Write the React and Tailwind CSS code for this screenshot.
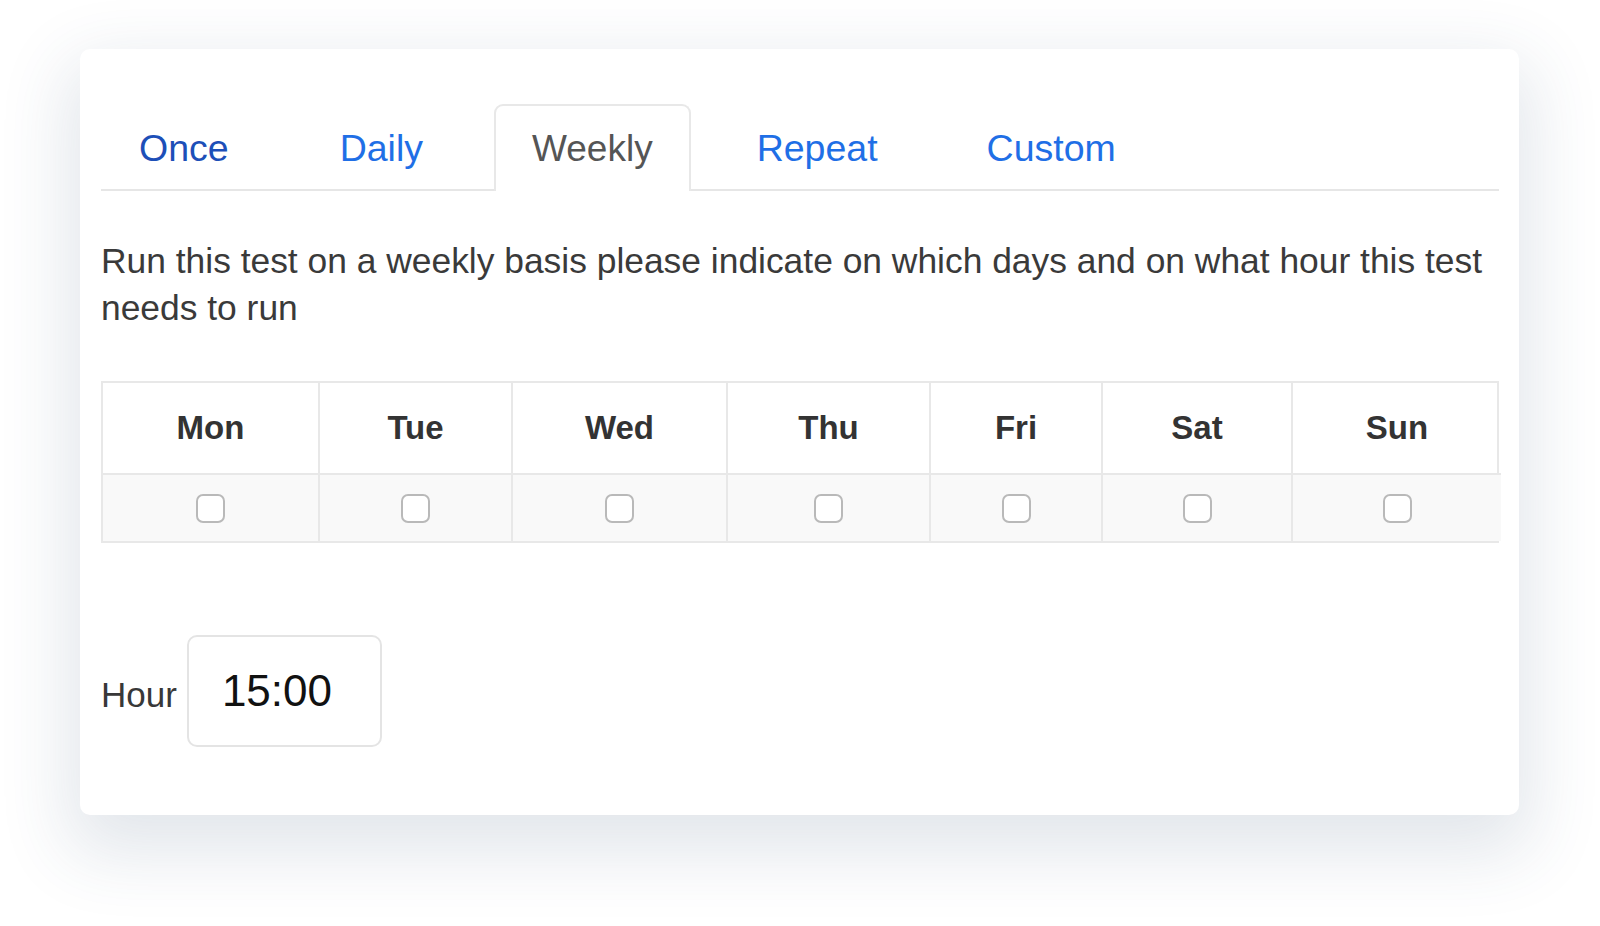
import React from "react";

const tabs = [
  { label: "Once", color: "text-[#1d4fb8]", mr: "mr-[35px]" },
  { label: "Daily", color: "text-[#1f6fe6]", mr: "mr-[33px]" },
  { label: "Weekly", active: true, mr: "mr-[28px]" },
  { label: "Repeat", color: "text-[#1f6fe6]", mr: "mr-[33px]" },
  { label: "Custom", color: "text-[#1f6fe6]", mr: "" },
];

const days = ["Mon", "Tue", "Wed", "Thu", "Fri", "Sat", "Sun"];

export default function App() {
  return (
    <div
      className="w-[1600px] h-[926px] bg-white overflow-hidden pt-[49px] pl-[80px]"
      style={{ fontFamily: '"Liberation Sans", Arial, sans-serif' }}
    >
      <div className="w-[1439px] h-[766px] bg-white rounded-[10px] shadow-[0_26px_70px_12px_rgba(50,75,115,0.14)] pt-[55px] pl-[21px] pr-[20px]">
        {/* Tabs */}
        <div className="flex items-end border-b-2 border-[#e6e6e6] h-[87px]">
          {tabs.map((t) =>
            t.active ? (
              <div
                key={t.label}
                className={`h-[87px] -mb-[2px] px-[36px] flex items-center bg-white border-2 border-b-0 border-[#e8e8e8] rounded-t-[9px] text-[37px] text-[#555555] ${t.mr}`}
              >
                {t.label}
              </div>
            ) : (
              <div
                key={t.label}
                className={`h-[85px] pt-[3px] px-[38px] flex items-center text-[37.5px] ${t.color} ${t.mr}`}
              >
                {t.label}
              </div>
            )
          )}
        </div>

        {/* Description */}
        <p className="mt-[47px] text-[35.4px] leading-[47px] text-[#3a3a3a] pr-[10px]">
          Run this test on a weekly basis please indicate on which days and on what hour this test needs to run
        </p>

        {/* Table */}
        <div className="mt-[49px] border-2 border-[#e8e8e8] grid grid-cols-[217px_193px_215px_203px_172px_190px_208px] w-[1398px]">
          {days.map((d, i) => (
            <div
              key={d}
              className={`h-[92px] flex items-center justify-center font-bold text-[33px] text-[#333333] border-b-2 border-[#e8e8e8] ${i < 6 ? "border-r-2" : ""}`}
            >
              {d}
            </div>
          ))}
          {days.map((d, i) => (
            <div
              key={d + "-c"}
              className={`h-[66px] flex items-center justify-center bg-[#f9f9f9] border-[#e8e8e8] ${i < 6 ? "border-r-2" : ""}`}
            >
              <div className="w-[29px] h-[29px] rounded-[7px] border-2 border-[#b9b9b9] bg-white" />
            </div>
          ))}
        </div>

        {/* Hour */}
        <div className="mt-[92px] flex items-center">
          <span className="text-[35px] text-[#383838] mt-[8px]">Hour</span>
          <div className="ml-[10px] w-[195px] h-[112px] border-2 border-[#e4e4e4] rounded-[10px] flex items-center pl-[33px] text-[44px] text-[#111111]">
            15:00
          </div>
        </div>
      </div>
    </div>
  );
}
